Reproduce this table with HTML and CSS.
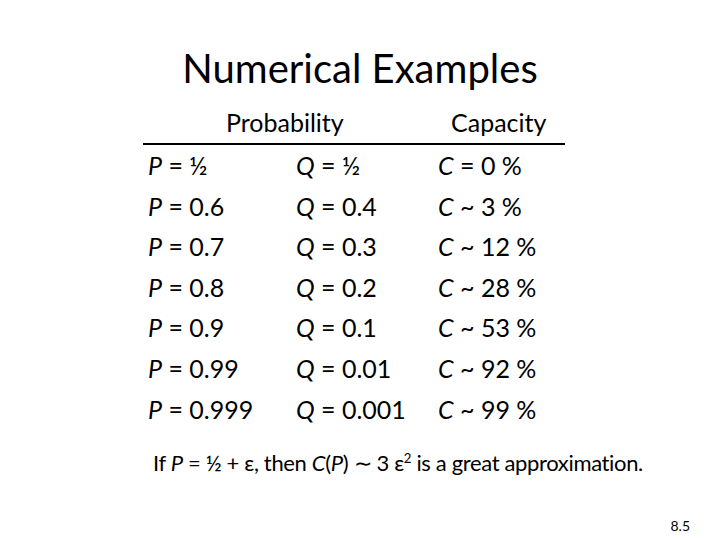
FILE: index.html
```html
<!DOCTYPE html>
<html lang="en">
<head>
  <meta charset="UTF-8" />
  <title>Numerical Examples</title>
  <link rel="stylesheet" href="styles.css">
</head>
<body>
  <div class="slide">
    <h1 class="title">Numerical Examples</h1>

    <div class="table">
      <div class="head">
        <div class="head-prob">Probability</div>
        <div class="head-cap">Capacity</div>
      </div>
      <div class="row"><span><i>P</i> = ½</span><span><i>Q</i> = ½</span><span><i>C</i> = 0 %</span></div>
      <div class="row"><span><i>P</i> = 0.6</span><span><i>Q</i> = 0.4</span><span><i>C</i> ~ 3 %</span></div>
      <div class="row"><span><i>P</i> = 0.7</span><span><i>Q</i> = 0.3</span><span><i>C</i> ~ 12 %</span></div>
      <div class="row"><span><i>P</i> = 0.8</span><span><i>Q</i> = 0.2</span><span><i>C</i> ~ 28 %</span></div>
      <div class="row"><span><i>P</i> = 0.9</span><span><i>Q</i> = 0.1</span><span><i>C</i> ~ 53 %</span></div>
      <div class="row"><span><i>P</i> = 0.99</span><span><i>Q</i> = 0.01</span><span><i>C</i> ~ 92 %</span></div>
      <div class="row"><span><i>P</i> = 0.999</span><span><i>Q</i> = 0.001</span><span><i>C</i> ~ 99 %</span></div>
    </div>

    <p class="note">If <i>P</i> = ½ + ε, then <i>C</i>(<i>P</i>) ∼ 3 ε<sup>2</sup> is a great approximation.</p>

    <div class="page-num">8.5</div>
  </div>
</body>
</html>
```

FILE: styles.css
```css
body {
  margin: 0;
  background: #fff;
  color: #000;
  font-family: Lato, "Open Sans", sans-serif;
}
.slide {
  width: 720px;
  height: 540px;
  position: relative;
  overflow: hidden;
}
.title {
  margin: 0;
  padding-top: 42px;
  text-align: center;
  font-size: 40px;
  font-weight: normal;
  line-height: 52px;
}
.table {
  margin: 8px 0 0 143px;
  width: 422px;
}
.head {
  display: flex;
  border-bottom: 2px solid #000;
  padding: 4px 0 5px;
  font-size: 25px;
  line-height: 32px;
}
.head-prob {
  width: 295px;
  padding-left: 83px;
  box-sizing: border-box;
}
.head-cap {
  padding-left: 13px;
}
.row {
  display: grid;
  grid-template-columns: 153px 142px 127px;
  font-size: 25px;
  line-height: 40.6px;
}
.row span:first-child {
  padding-left: 5px;
}
.note {
  margin: 18px 0 0;
  padding-left: 153px;
  font-size: 22px;
  letter-spacing: -0.35px;
  line-height: 32px;
  white-space: nowrap;
}
.note sup {
  font-size: 60%;
  line-height: 0;
}
.page-num {
  position: absolute;
  right: 30px;
  bottom: 6px;
  font-size: 14px;
}
```
